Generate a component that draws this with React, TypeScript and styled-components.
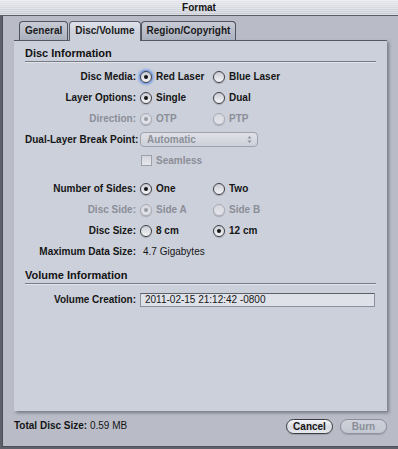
import styled, { createGlobalStyle, css } from "styled-components";

const GlobalStyle = createGlobalStyle`
  html, body {
    margin: 0;
    padding: 0;
    background: #5e6169;
    font-family: "Lucida Grande", "Liberation Sans", Arial, sans-serif;
    font-size: 10px;
    color: #111;
  }
`;

const Window = styled.div`
  width: 398px;
  height: 447px;
  display: flex;
  flex-direction: column;
  overflow: hidden;
`;

const TitleBar = styled.div`
  height: 15px;
  flex: none;
  background: repeating-linear-gradient(
      to bottom,
      rgba(255, 255, 255, 0.35) 0,
      rgba(255, 255, 255, 0.35) 1px,
      rgba(0, 0, 0, 0) 1px,
      rgba(0, 0, 0, 0) 2px
    ),
    linear-gradient(to bottom, #e4e6eb, #c9ccd4);
  border-bottom: 1px solid #5c5f68;
  text-align: center;
  font-weight: bold;
  line-height: 15px;
  color: #151515;
`;

const Body = styled.div`
  flex: 1;
  margin-left: 2px;
  border-left: 1px solid #4c4f57;
  border-bottom: 1px solid #4c4f57;
  background: #b9bcc7;
  padding: 5px 11px 0 11px;
  display: flex;
  flex-direction: column;
`;

const TabRow = styled.div`
  display: flex;
  padding-left: 5px;
  height: 19px;
  flex: none;
  position: relative;
  z-index: 1;
`;

const Tab = styled.div<{ $active?: boolean }>`
  height: 19px;
  box-sizing: border-box;
  padding: 0 5px;
  margin-right: 1px;
  border: 1px solid #4f535e;
  border-bottom: none;
  border-radius: 4px 4px 0 0;
  font-weight: bold;
  line-height: 18px;
  text-align: center;
  color: #1b1b1b;
  background: linear-gradient(to bottom, #c7cbd6, #aab0bd);
  ${(p) =>
    p.$active &&
    css`
      height: 20px;
      margin-right: 0;
      background: linear-gradient(to bottom, #dfe2ea, #ccd0db 60%);
      border-color: #5a5e69;
    `}
`;

const Panel = styled.div`
  flex: 1;
  background: #ccd0db;
  border-top: 1px solid #555965;
  box-shadow: 2px 2px 3px rgba(40, 44, 60, 0.45);
  padding: 0 11px;
  display: flex;
  flex-direction: column;
`;

const SectionHeader = styled.div<{ $top: number }>`
  margin-top: ${(p) => p.$top}px;
  font-size: 11px;
  font-weight: bold;
  line-height: 15px;
  color: #121212;
  border-bottom: 1px solid #777b86;
  box-shadow: 0 1px 0 #e2e4ea;
`;

const Form = styled.div<{ $top: number }>`
  margin-top: ${(p) => p.$top}px;
  display: grid;
  grid-template-columns: 110px 73px 1fr;
  grid-auto-rows: 21px;
`;

const Label = styled.div<{ $disabled?: boolean }>`
  grid-column: 1;
  text-align: right;
  font-weight: bold;
  align-self: center;
  margin-right: -1px;
  white-space: nowrap;
  color: ${(p) => (p.$disabled ? "#8b8e97" : "#161616")};
`;

const Cell = styled.div<{ $col: number; $span?: number }>`
  grid-column: ${(p) => p.$col} / span ${(p) => p.$span ?? 1};
  display: flex;
  align-items: center;
  padding-left: 5px;
`;

const Option = styled.label<{ $disabled?: boolean }>`
  display: flex;
  align-items: center;
  gap: 4px;
  font-weight: bold;
  white-space: nowrap;
  color: ${(p) => (p.$disabled ? "#8b8e97" : "#161616")};
`;

const RadioDot = styled.span<{ $checked?: boolean; $disabled?: boolean; $focus?: boolean }>`
  width: 12px;
  height: 12px;
  box-sizing: border-box;
  border-radius: 50%;
  position: relative;
  flex: none;
  border: 1px solid ${(p) => (p.$disabled ? "#a9acb5" : "#3d3f45")};
  background: ${(p) =>
    p.$disabled
      ? "linear-gradient(to bottom, #d6d8de, #e3e5ea)"
      : "linear-gradient(to bottom, #c9ccd3, #f4f5f7)"};
  box-shadow: ${(p) =>
    p.$focus
      ? "0 0 0 1px #7d9fe0, 0 0 2px 2px rgba(90, 140, 230, 0.55)"
      : "0 1px 1px rgba(0, 0, 0, 0.2)"};
  &::after {
    content: "";
    display: ${(p) => (p.$checked ? "block" : "none")};
    position: absolute;
    left: 3px;
    top: 3px;
    width: 4px;
    height: 4px;
    border-radius: 50%;
    background: ${(p) => (p.$disabled ? "#9a9da5" : "#151515")};
  }
`;

const Value = styled.span`
  padding-left: 3px;
  color: #161616;
`;

const Popup = styled.div`
  width: 118px;
  height: 15px;
  box-sizing: border-box;
  border: 1px solid #9fa2ab;
  border-radius: 4px;
  background: linear-gradient(to bottom, #dfe1e7, #cdd0d9);
  color: #8d9099;
  font-weight: bold;
  line-height: 13px;
  padding: 0 5px 0 6px;
  display: flex;
  justify-content: space-between;
  align-items: center;
`;

const CheckBox = styled.span`
  width: 11px;
  height: 11px;
  box-sizing: border-box;
  margin-left: 1px;
  border: 1px solid #9ea1aa;
  background: linear-gradient(to bottom, #d4d6dc, #e6e7ec);
  flex: none;
`;

const TextField = styled.div`
  width: 235px;
  height: 14px;
  box-sizing: border-box;
  border: 1px solid #8d909a;
  border-top-color: #5d6069;
  background: #dfe1e8;
  line-height: 12px;
  padding-left: 4px;
  color: #161616;
`;

const Footer = styled.div`
  height: 35px;
  flex: none;
  display: flex;
  justify-content: space-between;
  align-items: flex-start;
  padding-top: 8px;
  box-sizing: border-box;
`;

const Total = styled.div`
  line-height: 14px;
  color: #141414;
  b {
    font-weight: bold;
  }
`;

const Buttons = styled.div`
  display: flex;
  gap: 7px;
`;

const Button = styled.div<{ $disabled?: boolean }>`
  width: 47px;
  height: 15px;
  box-sizing: border-box;
  border-radius: 8px;
  text-align: center;
  font-weight: bold;
  line-height: 13px;
  border: 1px solid ${(p) => (p.$disabled ? "#8c909b" : "#3a3c42")};
  color: ${(p) => (p.$disabled ? "#8a8e99" : "#141414")};
  background: ${(p) =>
    p.$disabled
      ? "linear-gradient(to bottom, #cfd2da, #c3c7d1)"
      : "linear-gradient(to bottom, #f6f7f9, #d9dbe1 55%, #e9eaee)"};
  box-shadow: 0 1px 1px rgba(0, 0, 0, 0.15);
`;

const UpDown = () => (
  <svg width="5" height="9" viewBox="0 0 5 9">
    <path d="M0.5 3.5 L2.5 1 L4.5 3.5 Z M0.5 5.5 L2.5 8 L4.5 5.5 Z" fill="#8d9099" />
  </svg>
);

type RadioProps = {
  text: string;
  checked?: boolean;
  disabled?: boolean;
  focus?: boolean;
};

const Radio = ({ text, checked, disabled, focus }: RadioProps) => (
  <Option $disabled={disabled}>
    <RadioDot $checked={checked} $disabled={disabled} $focus={focus} />
    {text}
  </Option>
);

type RadioRowProps = {
  label: string;
  disabled?: boolean;
  options: [RadioProps, RadioProps];
};

const RadioRow = ({ label, disabled, options }: RadioRowProps) => (
  <>
    <Label $disabled={disabled}>{label}</Label>
    <Cell $col={2}>
      <Radio {...options[0]} />
    </Cell>
    <Cell $col={3}>
      <Radio {...options[1]} />
    </Cell>
  </>
);

export default function App() {
  return (
    <>
      <GlobalStyle />
      <Window>
        <TitleBar>Format</TitleBar>
        <Body>
          <TabRow>
            <Tab>General</Tab>
            <Tab $active>Disc/Volume</Tab>
            <Tab>Region/Copyright</Tab>
          </TabRow>
          <Panel>
            <SectionHeader $top={5}>Disc Information</SectionHeader>
            <Form $top={4}>
              <RadioRow
                label="Disc Media:"
                options={[
                  { text: "Red Laser", checked: true, focus: true },
                  { text: "Blue Laser" },
                ]}
              />
              <RadioRow
                label="Layer Options:"
                options={[{ text: "Single", checked: true }, { text: "Dual" }]}
              />
              <RadioRow
                label="Direction:"
                disabled
                options={[
                  { text: "OTP", checked: true, disabled: true },
                  { text: "PTP", disabled: true },
                ]}
              />
              <Label>Dual-Layer Break Point:</Label>
              <Cell $col={2} $span={2}>
                <Popup>
                  Automatic
                  <UpDown />
                </Popup>
              </Cell>
              <Cell $col={2} $span={2}>
                <Option $disabled>
                  <CheckBox />
                  Seamless
                </Option>
              </Cell>
            </Form>
            <Form $top={7}>
              <RadioRow
                label="Number of Sides:"
                options={[{ text: "One", checked: true }, { text: "Two" }]}
              />
              <RadioRow
                label="Disc Side:"
                disabled
                options={[
                  { text: "Side A", checked: true, disabled: true },
                  { text: "Side B", disabled: true },
                ]}
              />
              <RadioRow
                label="Disc Size:"
                options={[{ text: "8 cm" }, { text: "12 cm", checked: true }]}
              />
              <Label>Maximum Data Size:</Label>
              <Cell $col={2} $span={2}>
                <Value>4.7 Gigabytes</Value>
              </Cell>
            </Form>
            <SectionHeader $top={6}>Volume Information</SectionHeader>
            <Form $top={5}>
              <Label>Volume Creation:</Label>
              <Cell $col={2} $span={2}>
                <TextField>2011-02-15 21:12:42 -0800</TextField>
              </Cell>
            </Form>
          </Panel>
          <Footer>
            <Total>
              <b>Total Disc Size:</b> 0.59 MB
            </Total>
            <Buttons>
              <Button>Cancel</Button>
              <Button $disabled>Burn</Button>
            </Buttons>
          </Footer>
        </Body>
      </Window>
    </>
  );
}
